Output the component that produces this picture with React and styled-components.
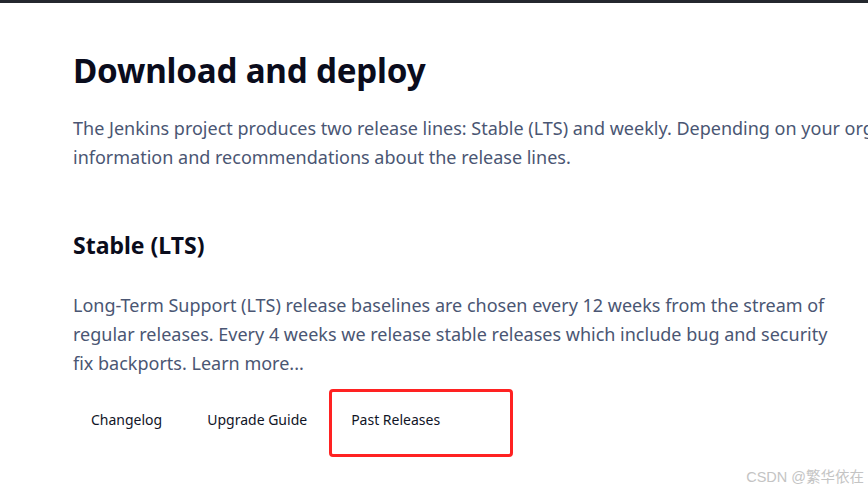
import styled, { createGlobalStyle } from 'styled-components';

const GlobalStyle = createGlobalStyle`
    html, body {
        margin: 0;
        padding: 0;
        background: #ffffff;
        overflow: hidden;
    }
    body {
        font-family: "Noto Sans", "Open Sans", "Noto Sans CJK SC", sans-serif;
    }
`;

const TopBar = styled.div`
    height: 3px;
    background: #24282e;
`;

const Page = styled.main`
    padding: 47px 0 0 73px;
    width: 1000px;
`;

const Title = styled.h1`
    margin: 0;
    font-size: 33.2px;
    line-height: 42px;
    font-weight: 700;
    color: #0a0c1c;
    letter-spacing: -0.2px;
`;

const Lead = styled.p`
    margin: 22px 0 0 0;
    font-size: 18px;
    line-height: 29px;
    color: #4a5673;
    white-space: nowrap;
`;

const Section = styled.section`
    margin-top: 58px;
    width: 760px;
`;

const SectionTitle = styled.h2`
    margin: 0;
    font-size: 23px;
    line-height: 30px;
    font-weight: 700;
    color: #0a0c1c;
`;

const Text = styled.p`
    margin: 31px 0 0 0;
    font-size: 18px;
    line-height: 29px;
    color: #4a5673;
`;

const Actions = styled.div`
    display: flex;
    margin: 11px 0 0 -5px;
    height: 68px;
`;

const Action = styled.a`
    display: block;
    box-sizing: border-box;
    height: 100%;
    padding: 21px 22px 0 23px;
    font-size: 14px;
    line-height: 20px;
    color: #101426;
    text-decoration: none;
    ${({ $marked }) => $marked && `
        width: 184px;
        padding: 18px 0 0 19px;
        border: 3px solid #ff2222;
        border-radius: 4px;
    `}
`;

const Watermark = styled.div`
    position: absolute;
    right: 4px;
    bottom: 6px;
    font-family: "Liberation Sans", "Noto Sans CJK SC", sans-serif;
    font-size: 14.5px;
    color: #c4c4c4;
`;

export default function App() {
    return <>
        <GlobalStyle />
        <TopBar />
        <Page>
            <Title>Download and deploy</Title>
            <Lead>
                The Jenkins project produces two release lines: Stable (LTS) and weekly. Depending on your organization's needs, one may be preferred over the other. See the links below for more<br />
                information and recommendations about the release lines.
            </Lead>
            <Section>
                <SectionTitle>Stable (LTS)</SectionTitle>
                <Text>
                    Long-Term Support (LTS) release baselines are chosen every 12 weeks from the stream of regular releases. Every 4 weeks we release stable releases which include bug and security fix backports. Learn more...
                </Text>
                <Actions>
                    <Action href='#'>Changelog</Action>
                    <Action href='#'>Upgrade Guide</Action>
                    <Action href='#' $marked>Past Releases</Action>
                </Actions>
            </Section>
        </Page>
        <Watermark>CSDN @繁华依在</Watermark>
    </>;
}
